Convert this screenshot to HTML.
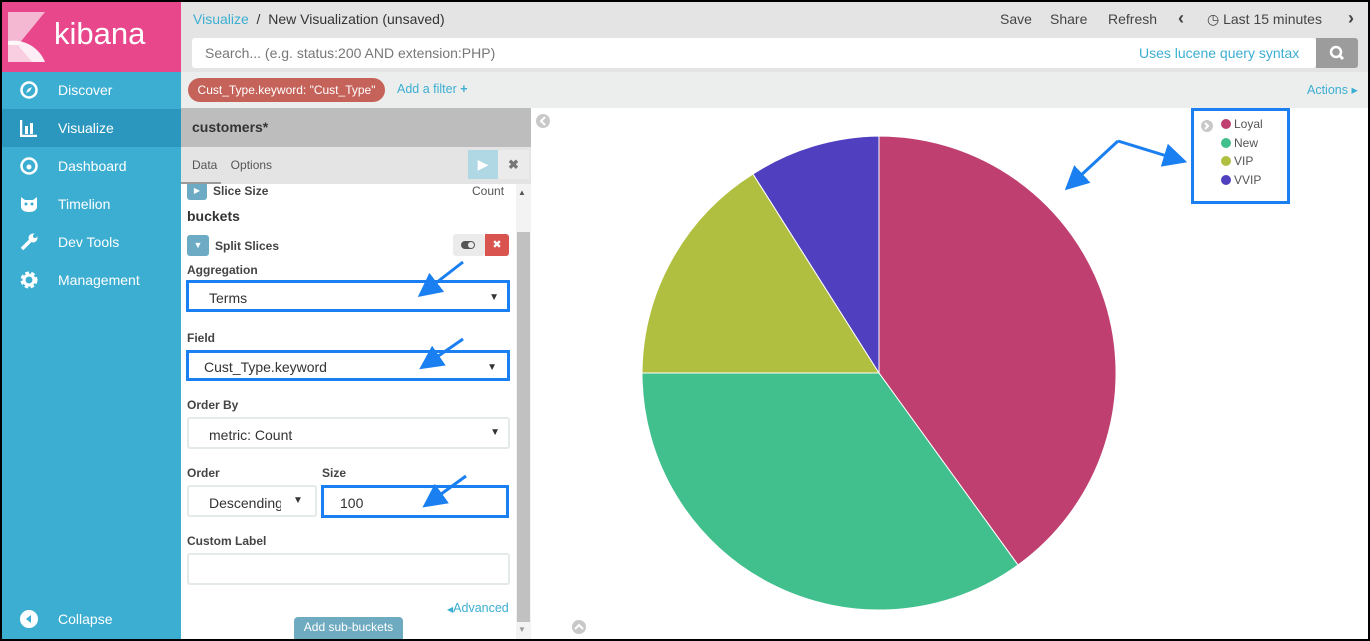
<!DOCTYPE html>
<html><head><meta charset="utf-8"><style>
*{box-sizing:border-box;margin:0;padding:0}
body{width:1370px;height:641px;position:relative;overflow:hidden;font-family:"Liberation Sans",sans-serif;background:#000}
.a{position:absolute}
.side{left:2px;top:2px;width:179px;height:637px;background:#3caed2}
.nav{left:0;width:179px;height:38px;color:#fff;font-size:14px;line-height:38px;padding-left:56px}
.nav svg{position:absolute;left:18px;top:10px}
.lbl{font-size:12px;font-weight:bold;color:#444}
.sel{background:#fff;border:2px solid #e4e9ea;border-radius:3px;font-size:14px;color:#333;padding-left:20px}
.blue{border:3px solid #1a7ff0;border-radius:0}
</style></head><body>
<div class="a" style="left:2px;top:2px;width:1366px;height:637px;background:#fff"></div>
<div class="a side"></div>
<div class="a" style="left:2px;top:2px;width:179px;height:70px;background:#e8488b"></div>
<svg class="a" style="left:8px;top:12px" width="40" height="50"><polygon points="0,0 37,0 10,33 0,33" fill="#f5b8d2"/><path d="M0,29 A34,34 0 0 1 37,50 L0,50Z" fill="#fff" opacity=".9"/><polygon points="10,33 24,50 0,50 0,33" fill="#f9c6dc" opacity=".8"/></svg>
<div class="a" style="left:54px;top:16px;color:#fff;font-size:31px">kibana</div>
<div class="a" style="left:2px;top:71px;width:179px;height:570px">
<div class="a nav" style="top:0"><svg width="18" height="18"><circle cx="9" cy="9" r="7.5" fill="none" stroke="#fff" stroke-width="2.5"/><path d="M6,12 L8,8 L12,6 L10,10Z" fill="#fff"/></svg>Discover</div>
<div class="a nav" style="top:38px;background:#2b97bf"><svg width="18" height="18"><path d="M1,1V17H17" stroke="#fff" stroke-width="2.5" fill="none"/><rect x="5" y="7" width="3" height="8" fill="#fff"/><rect x="10" y="4" width="3" height="11" fill="#fff"/></svg>Visualize</div>
<div class="a nav" style="top:76px"><svg width="18" height="18"><circle cx="9" cy="9" r="7.5" fill="none" stroke="#fff" stroke-width="2.5"/><circle cx="9" cy="10" r="2.5" fill="#fff"/></svg>Dashboard</div>
<div class="a nav" style="top:114px"><svg width="18" height="18"><path d="M1,2 L5,5 L13,5 L17,2 V11 Q17,17 9,17 Q1,17 1,11Z" fill="#fff"/><circle cx="6" cy="9" r="1.5" fill="#3caed2"/><circle cx="12" cy="9" r="1.5" fill="#3caed2"/></svg>Timelion</div>
<div class="a nav" style="top:152px"><svg width="18" height="18"><path d="M2,16 L10,8" stroke="#fff" stroke-width="3.5"/><circle cx="13" cy="5" r="4.5" fill="#fff"/><circle cx="15" cy="3" r="2" fill="#3caed2"/></svg>Dev Tools</div>
<div class="a nav" style="top:190px"><svg width="18" height="18"><circle cx="9" cy="9" r="6" fill="none" stroke="#fff" stroke-width="5" stroke-dasharray="3 2"/><circle cx="9" cy="9" r="5" fill="none" stroke="#fff" stroke-width="3"/></svg>Management</div>
<div class="a nav" style="top:529px"><svg width="18" height="18"><circle cx="9" cy="9" r="9" fill="#fff"/><path d="M11,5 L6,9 L11,13Z" fill="#3caed2"/></svg>Collapse</div>
</div>
<div class="a" style="left:181px;top:2px;width:1187px;height:70px;background:#e4e4e4"></div>
<div class="a" style="left:193px;top:11px;font-size:14px;color:#333"><span style="color:#3caed2">Visualize</span> &nbsp;/ &nbsp;New Visualization (unsaved)</div>
<div class="a" style="left:1000px;top:11px;font-size:14px;color:#444">Save</div>
<div class="a" style="left:1050px;top:11px;font-size:14px;color:#444">Share</div>
<div class="a" style="left:1108px;top:11px;font-size:14px;color:#444">Refresh</div>
<div class="a" style="left:1178px;top:8px;font-size:18px;font-weight:bold;color:#444">&#8249;</div>
<div class="a" style="left:1207px;top:11px;font-size:14px;color:#444">&#9719; Last 15 minutes</div>
<div class="a" style="left:1348px;top:8px;font-size:18px;font-weight:bold;color:#444">&#8250;</div>
<div class="a" style="left:192px;top:38px;width:1124px;height:30px;background:#fff;border-radius:3px"></div>
<div class="a" style="left:205px;top:45px;font-size:14px;color:#777">Search... (e.g. status:200 AND extension:PHP)</div>
<div class="a" style="left:1139px;top:45px;font-size:14px;color:#3caed2">Uses lucene query syntax</div>
<div class="a" style="left:1316px;top:38px;width:42px;height:30px;background:#9c9c9c;border-radius:0 3px 3px 0"><svg width="42" height="30"><circle cx="20" cy="14" r="5" stroke="#fff" stroke-width="2.5" fill="none"/><path d="M24,18 L27,21" stroke="#fff" stroke-width="3"/></svg></div>
<div class="a" style="left:181px;top:72px;width:1187px;height:36px;background:#eceeee"></div>
<div class="a" style="left:188px;top:78px;width:197px;height:24px;background:#c5635a;border-radius:12px;color:#fff;font-size:12px;line-height:24px;text-align:center">Cust_Type.keyword: "Cust_Type"</div>
<div class="a" style="left:397px;top:82px;font-size:12.5px;color:#3caed2">Add a filter <b>+</b></div>
<div class="a" style="left:1307px;top:82px;font-size:12.5px;color:#3caed2">Actions &#9656;</div>
<div class="a" style="left:181px;top:108px;width:350px;height:39px;background:#bdbdbd"></div>
<div class="a" style="left:192px;top:119px;font-size:14px;font-weight:bold;color:#333">customers*</div>
<div class="a" style="left:181px;top:147px;width:350px;height:37px;background:#e4e4e4"></div>
<div class="a" style="left:181px;top:182px;width:40px;height:2px;background:#999"></div>
<div class="a" style="left:192px;top:158px;font-size:12px;color:#555">Data &nbsp;&nbsp;&nbsp;Options</div>
<div class="a" style="left:468px;top:150px;width:30px;height:29px;background:#b0d8e4;color:#fff;text-align:center;line-height:29px;font-size:14px">&#9654;</div>
<div class="a" style="left:498px;top:150px;width:31px;height:29px;background:#ebebeb;color:#777;text-align:center;line-height:29px;font-size:13px;font-weight:bold">&#10006;</div>
<div class="a" style="left:516px;top:184px;width:15px;height:455px;background:#f3f3f3"></div>
<div class="a" style="left:517px;top:232px;width:13px;height:390px;background:#c1c1c1"></div>
<div class="a" style="left:518px;top:188px;font-size:8px;color:#555">&#9650;</div>
<div class="a" style="left:518px;top:625px;font-size:8px;color:#999">&#9660;</div>
<div class="a" style="left:187px;top:184px;width:20px;height:16px;background:#6dabc4;border-radius:0 0 3px 3px;color:#fff;font-size:8px;text-align:center;line-height:14px">&#9654;</div>
<div class="a lbl" style="left:213px;top:184px">Slice Size</div>
<div class="a" style="left:472px;top:184px;font-size:12px;color:#555">Count</div>
<div class="a" style="left:187px;top:208px;font-size:14px;font-weight:bold;color:#333">buckets</div>
<div class="a" style="left:187px;top:235px;width:22px;height:21px;background:#6dabc4;border-radius:3px;color:#fff;font-size:9px;text-align:center;line-height:21px">&#9660;</div>
<div class="a lbl" style="left:215px;top:239px">Split Slices</div>
<div class="a" style="left:453px;top:234px;width:32px;height:22px;background:#ebebeb;border-radius:3px"><svg width="32" height="22"><rect x="8" y="7" width="14" height="8" rx="4" fill="#555"/><circle cx="18" cy="11" r="3" fill="#ebebeb"/></svg></div>
<div class="a" style="left:485px;top:234px;width:24px;height:22px;background:#d9534f;color:#fff;text-align:center;line-height:22px;font-size:11px;border-radius:0 3px 3px 0">&#10006;</div>
<div class="a lbl" style="left:187px;top:263px">Aggregation</div>
<div class="a sel blue" style="left:186px;top:280px;width:324px;height:32px;line-height:30px">Terms<span style="position:absolute;right:8px;font-size:10px">&#9660;</span></div>
<div class="a lbl" style="left:187px;top:331px">Field</div>
<div class="a sel blue" style="left:186px;top:350px;width:324px;height:31px;line-height:29px;padding-left:15px">Cust_Type.keyword<span style="position:absolute;right:10px;font-size:10px">&#9660;</span></div>
<div class="a lbl" style="left:187px;top:398px">Order By</div>
<div class="a sel" style="left:187px;top:417px;width:323px;height:32px;line-height:32px">metric: Count<span style="position:absolute;right:8px;font-size:10px;line-height:28px">&#9660;</span></div>
<div class="a lbl" style="left:187px;top:466px">Order</div>
<div class="a lbl" style="left:322px;top:466px">Size</div>
<div class="a sel" style="left:187px;top:485px;width:130px;height:32px;line-height:32px;overflow:hidden;white-space:nowrap">Descending<span style="position:absolute;right:0;top:0;width:34px;height:28px;background:#fff;text-align:center;font-size:10px;line-height:28px">&#9660;</span></div>
<div class="a sel blue" style="left:321px;top:485px;width:188px;height:33px;line-height:31px;padding-left:16px">100</div>
<div class="a lbl" style="left:187px;top:534px">Custom Label</div>
<div class="a sel" style="left:187px;top:553px;width:323px;height:32px"></div>
<div class="a" style="left:447px;top:601px;font-size:12.5px;color:#3caed2"><span style="font-size:8px">&#9664;</span>Advanced</div>
<div class="a" style="left:294px;top:617px;width:109px;height:22px;background:#6fabc0;border-radius:4px 4px 0 0;color:#fff;font-size:12px;text-align:center;line-height:21px">Add sub-buckets</div>
<svg class="a" style="left:531px;top:108px" width="837" height="531">
<circle cx="12" cy="13" r="7" fill="#c8c8c8"/><path d="M14,9 L10,13 L14,17" stroke="#fff" stroke-width="2" fill="none"/>
<circle cx="48" cy="519" r="7" fill="#c8c8c8"/><path d="M44,521 L48,517 L52,521" stroke="#fff" stroke-width="2" fill="none"/>
<g transform="translate(-531,-108)" stroke="#fff" stroke-width="1">
<path d="M879,373 L879,136 A237,237 0 0 1 1018,565Z" fill="#bf4070"/>
<path d="M879,373 L1018,565 A237,237 0 0 1 642,373Z" fill="#41bf8c"/>
<path d="M879,373 L642,373 A237,237 0 0 1 753,174Z" fill="#b0bf40"/>
<path d="M879,373 L753,174 A237,237 0 0 1 879,136Z" fill="#5040bf"/>
<circle cx="1207" cy="126" r="6" fill="#c8c8c8" stroke="none"/><path d="M1205,123 L1208,126 L1205,129" stroke="#fff" stroke-width="2" fill="none"/>
<circle cx="1226" cy="124" r="5" fill="#bf4070" stroke="none"/>
<circle cx="1226" cy="143" r="5" fill="#41bf8c" stroke="none"/>
<circle cx="1226" cy="161" r="5" fill="#b0bf40" stroke="none"/>
<circle cx="1226" cy="180" r="5" fill="#5040bf" stroke="none"/>
<g font-size="12" fill="#555" stroke="none" font-family="Liberation Sans"><text x="1234" y="128">Loyal</text><text x="1234" y="147">New</text><text x="1234" y="165">VIP</text><text x="1234" y="184">VVIP</text></g>
<rect x="1192.5" y="109.5" width="96" height="93" fill="none" stroke="#1a7ff0" stroke-width="3"/>
</g>
</svg>
<svg class="a" style="left:0;top:0" width="1370" height="641">
<defs><marker id="m" markerWidth="8" markerHeight="8" refX="2" refY="4" orient="auto" markerUnits="strokeWidth"><path d="M0,0 L8,4 L0,8Z" fill="#1a7ff0"/></marker></defs>
<g stroke="#1a7ff0" stroke-width="3" fill="none" marker-end="url(#m)">
<path d="M463,262 L432,286"/><path d="M463,339 L434,359"/><path d="M466,476 L437,497"/>
<path d="M1118,141 L1078,178"/><path d="M1118,141 L1170,157"/>
</g></svg>
<div class="a" style="left:0;top:0;width:1370px;height:641px;border:2px solid #000"></div>
</body></html>
